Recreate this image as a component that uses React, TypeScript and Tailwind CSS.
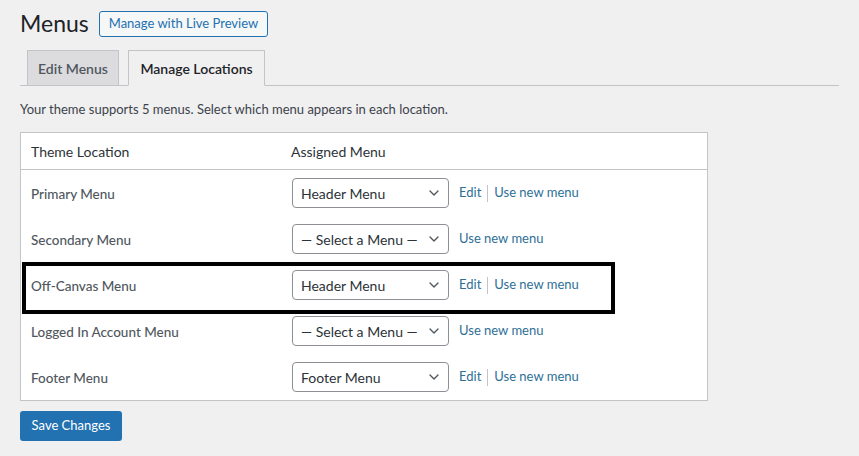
import { ChevronDown } from "lucide-react";

type Loc = {
  name: string;
  value: string;
  hasEdit: boolean;
};

const locations: Loc[] = [
  { name: "Primary Menu", value: "Header Menu", hasEdit: true },
  { name: "Secondary Menu", value: "— Select a Menu —", hasEdit: false },
  { name: "Off-Canvas Menu", value: "Header Menu", hasEdit: true },
  { name: "Logged In Account Menu", value: "— Select a Menu —", hasEdit: false },
  { name: "Footer Menu", value: "Footer Menu", hasEdit: true },
];

const FakeSelect = ({ value }: { value: string }) => (
  <div className="flex h-[30px] w-[157px] items-center justify-between rounded-[4px] border border-[#8c8f94] bg-white pl-[8px] pr-[6px] text-[14px] text-[#2c3338]">
    <span className="whitespace-nowrap">{value}</span>
    <ChevronDown size={16} strokeWidth={2} className="shrink-0 text-[#50575e]" />
  </div>
);

export default function App() {
  return (
    <div
      className="min-h-[456px] w-full bg-[#f0f0f1] pl-[20px] pr-[20px] text-[#3c434a]"
      style={{ fontFamily: '"Lato", "Noto Sans", sans-serif' }}
    >
      {/* heading */}
      <div className="flex items-center gap-[10px] pt-[9px]">
        <h1 className="text-[23px] leading-[29px] font-normal text-[#1d2327]">Menus</h1>
        <button className="flex h-[26px] items-center rounded-[3px] border border-[#2271b1] bg-[#f6f7f7] px-[9px] text-[13px] text-[#2271b1]">
          Manage with Live Preview
        </button>
      </div>

      {/* tabs */}
      <div className="mt-[12px] flex items-end border-b border-[#c3c4c7]">
        <div className="mb-[-1px] ml-[7px] flex h-[36px] w-[92px] items-center justify-center border border-[#c3c4c7] bg-[#dcdcde] text-[14px] font-semibold text-[#50575e]">
          Edit Menus
        </div>
        <div className="mb-[-1px] ml-[9px] flex h-[36px] w-[137px] items-center justify-center border border-[#c3c4c7] border-b-[#f0f0f1] bg-[#f0f0f1] text-[14px] font-semibold text-[#1d2327]">
          Manage Locations
        </div>
      </div>

      <p className="mt-[15px] text-[13px] leading-[17px] text-[#3c434a]">
        Your theme supports 5 menus. Select which menu appears in each location.
      </p>

      {/* table */}
      <div className="relative mt-[14px] w-[688px] border border-[#c3c4c7] bg-white">
        <div className="flex h-[37px] items-center border-b border-[#c3c4c7] text-[14px] text-[#2c3338]">
          <div className="w-[270px] pl-[10px]">Theme Location</div>
          <div>Assigned Menu</div>
        </div>
        {locations.map((loc) => (
          <div key={loc.name} className="flex h-[46px] items-center">
            <div className="w-[271px] pl-[10px] pt-[2px] text-[13.5px] font-medium text-[#50575e]">
              {loc.name}
            </div>
            <FakeSelect value={loc.value} />
            <div className="ml-[10px] flex items-center text-[13px] text-[#2e6f96]">
              {loc.hasEdit && (
                <>
                  <span>Edit</span>
                  <span className="mx-[6px] h-[17px] w-px bg-[#c3c4c7]" />
                </>
              )}
              <span>Use new menu</span>
            </div>
          </div>
        ))}

        {/* annotation box */}
        <div className="pointer-events-none absolute left-[1px] top-[129px] h-[52px] w-[593px] border-[4px] border-black" />
      </div>

      <button className="mt-[10px] flex h-[30px] w-[102px] items-center justify-center rounded-[3px] bg-[#2271b1] text-[13px] text-white">
        Save Changes
      </button>
    </div>
  );
}
